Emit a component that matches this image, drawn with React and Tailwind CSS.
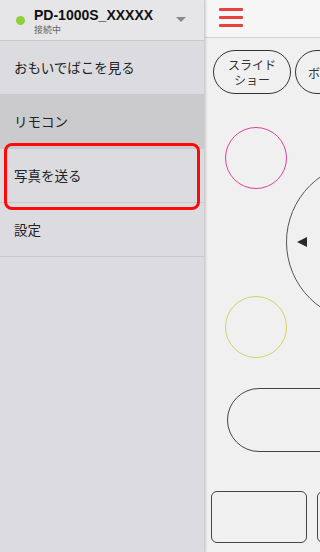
import React from "react";

const jp = { fontFamily: '"Noto Sans CJK JP", "Noto Sans", sans-serif' };

function MenuItem({ label, active }) {
  return (
    <div
      className={`h-[54px] flex items-center pl-[14px] border-b border-[#c9c9cd] text-[13.5px] text-[#222] ${
        active ? "bg-[#cbcbce]" : ""
      }`}
      style={jp}
    >
      {label}
    </div>
  );
}

export default function App() {
  return (
    <div className="w-[320px] h-[552px] flex overflow-hidden bg-[#f0f0f0]">
      <div className="relative w-[205px] shrink-0 h-full bg-[#dcdce0] shadow-[1px_0_2px_rgba(0,0,0,0.15)] z-10 border-r border-[#cfcfd2]">
        <div className="h-[41px] bg-[#e6e6e8] border-b border-[#c9c9cd] flex items-center pl-[16px] pr-[16px]">
          <div className="w-[9px] h-[9px] rounded-full bg-[#8cd03c]" />
          <div className="ml-[9px] flex-1 flex flex-col">
            <div
              className="text-[14px] font-bold text-[#111] leading-[16px] mt-[1px]"
              style={{ fontFamily: '"Liberation Sans", Arial, sans-serif' }}
            >
              PD-1000S_XXXXX
            </div>
            <div className="text-[9px] leading-[11px] text-[#666] mt-[1px]" style={jp}>
              接続中
            </div>
          </div>
          <svg width="10" height="6" viewBox="0 0 10 6" className="mr-[2px]">
            <path d="M0 0 L10 0 L5 5 Z" fill="#8a8a8e" />
          </svg>
        </div>
        <MenuItem label="おもいでばこを見る" />
        <MenuItem label="リモコン" active />
        <MenuItem label="写真を送る" />
        <MenuItem label="設定" />
        <div className="absolute left-[4px] top-[143px] w-[196px] h-[67px] border-[3px] border-[#ff0a0a] rounded-[8px]" />
      </div>

      <div className="flex-1 min-w-0 h-full flex flex-col overflow-hidden">
        <div className="h-[38px] shrink-0 bg-[#f6f6f6] border-b border-[#d2d2d2] flex items-center pl-[14px]">
          <div className="flex flex-col gap-[5px] mt-[-2px]">
            <div className="w-[24px] h-[3px] bg-[#e8403f] rounded-[1px]" />
            <div className="w-[24px] h-[3px] bg-[#e8403f] rounded-[1px]" />
            <div className="w-[24px] h-[3px] bg-[#e8403f] rounded-[1px]" />
          </div>
        </div>

        <div className="flex gap-[4px] pl-[8px] mt-[12px] shrink-0">
          <div
            className="w-[78px] h-[44px] shrink-0 rounded-full border border-[#333] flex flex-col items-center justify-center text-center text-[12px] leading-[15px] text-[#333]"
            style={jp}
          >
            <span className="block">スライド</span>
            <span className="block">ショー</span>
          </div>
          <div
            className="w-[78px] h-[44px] shrink-0 rounded-full border border-[#333] flex items-center pl-[12px] text-[12px] leading-[15px] text-[#333] overflow-hidden"
            style={jp}
          >
            ボタン
          </div>
        </div>

        <div className="flex mt-[33px] shrink-0">
          <div className="ml-[20px] flex flex-col shrink-0">
            <div className="w-[62px] h-[62px] rounded-full border border-[#e0409a]" />
            <div className="w-[62px] h-[62px] rounded-full border border-[#d4d26a] mt-[107px]" />
          </div>
          <div className="ml-[-1px] mt-[35px] w-[160px] h-[160px] shrink-0 rounded-full border border-[#555] flex items-center pl-[10px]">
            <svg width="10" height="10" viewBox="0 0 10 10">
              <path d="M0 5 L10 0 L10 10 Z" fill="#2a2a2a" />
            </svg>
          </div>
        </div>

        <div className="ml-[22px] mt-[30px] w-[200px] h-[64px] shrink-0 rounded-full border border-[#444]" />

        <div className="flex gap-[10px] ml-[6px] mt-[39px] shrink-0">
          <div className="w-[96px] h-[52px] shrink-0 rounded-[6px] border border-[#444]" />
          <div className="w-[96px] h-[52px] shrink-0 rounded-[6px] border border-[#444]" />
        </div>
      </div>
    </div>
  );
}
